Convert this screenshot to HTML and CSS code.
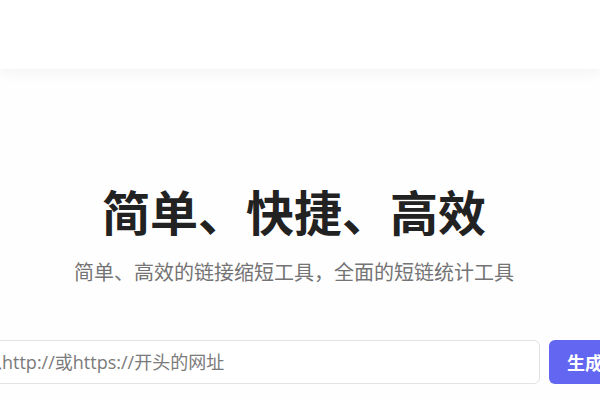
FILE: index.html
```html
<!DOCTYPE html>
<html lang="zh-CN">
<head>
  <meta charset="UTF-8">
  <meta name="viewport" content="width=device-width, initial-scale=1.0">
  <title>短链接生成</title>
  <link rel="stylesheet" href="styles.css">
</head>
<body>
  <header class="topbar"></header>

  <main class="hero">
    <h1 class="hero-title">简单、快捷、高效</h1>
    <p class="hero-subtitle">简单、高效的链接缩短工具，全面的短链统计工具</p>

    <form class="shorten-form" onsubmit="return false">
      <input type="text" class="url-input" placeholder="请输入以http://或https://开头的网址">
      <button type="submit" class="shorten-button">生成短链接</button>
    </form>
  </main>
</body>
</html>
```

FILE: styles.css
```css
body {
    margin: 0;
    padding: 0;
    background-color: #fefefe;
    font-family: "Open Sans", "Noto Sans CJK SC", sans-serif;
    overflow: hidden;
}

.topbar {
    height: 69px;
    background-color: #fff;
    box-shadow: 0 3px 14px rgba(0, 0, 0, 0.05);
    position: relative;
}

.hero {
    display: flex;
    flex-direction: column;
    align-items: center;
    padding: 112px 12px 0 0;
}

.hero-title {
    margin: 0;
    font-size: 48px;
    line-height: 58px;
    font-weight: 700;
    color: #222;
    font-family: "Noto Sans CJK SC", sans-serif;
}

.hero-subtitle {
    margin: 18px 0 0;
    font-size: 20px;
    line-height: 30px;
    color: #747474;
    font-family: "Noto Sans CJK SC", sans-serif;
}

.shorten-form {
    display: flex;
    gap: 9px;
    width: 762px;
    flex-shrink: 0;
    margin-top: 53px;
}

.url-input {
    flex: 1;
    height: 44px;
    box-sizing: border-box;
    padding: 0 16px;
    border: 1px solid #e2e2e2;
    border-radius: 6px;
    background-color: #fff;
    font-size: 18px;
    font-family: "Open Sans", "Noto Sans CJK SC", sans-serif;
    color: #333;
    outline: none;
}

.url-input::placeholder {
    color: #7a7a7a;
}

.shorten-button {
    height: 44px;
    padding: 0 18px;
    border: none;
    border-radius: 6px;
    background-color: #6366f1;
    color: #fff;
    font-size: 18px;
    font-weight: 700;
    font-family: "Noto Sans CJK SC", sans-serif;
    cursor: pointer;
}
```
